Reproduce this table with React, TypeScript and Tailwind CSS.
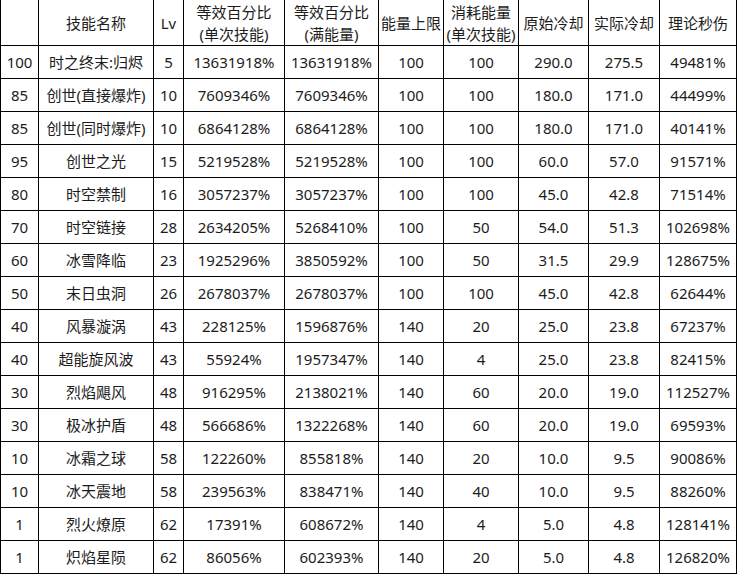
const cols = "grid-cols-[38px_115px_30px_101px_94px_65px_75px_70px_71px_77px]";

const headers: string[][] = [
  [""],
  ["技能名称"],
  ["Lv"],
  ["等效百分比", "(单次技能)"],
  ["等效百分比", "(满能量)"],
  ["能量上限"],
  ["消耗能量", "(单次技能)"],
  ["原始冷却"],
  ["实际冷却"],
  ["理论秒伤"],
];

const rows: string[][] = [
  ["100", "时之终末:归烬", "5", "13631918%", "13631918%", "100", "100", "290.0", "275.5", "49481%"],
  ["85", "创世(直接爆炸)", "10", "7609346%", "7609346%", "100", "100", "180.0", "171.0", "44499%"],
  ["85", "创世(同时爆炸)", "10", "6864128%", "6864128%", "100", "100", "180.0", "171.0", "40141%"],
  ["95", "创世之光", "15", "5219528%", "5219528%", "100", "100", "60.0", "57.0", "91571%"],
  ["80", "时空禁制", "16", "3057237%", "3057237%", "100", "100", "45.0", "42.8", "71514%"],
  ["70", "时空链接", "28", "2634205%", "5268410%", "100", "50", "54.0", "51.3", "102698%"],
  ["60", "冰雪降临", "23", "1925296%", "3850592%", "100", "50", "31.5", "29.9", "128675%"],
  ["50", "末日虫洞", "26", "2678037%", "2678037%", "100", "100", "45.0", "42.8", "62644%"],
  ["40", "风暴漩涡", "43", "228125%", "1596876%", "140", "20", "25.0", "23.8", "67237%"],
  ["40", "超能旋风波", "43", "55924%", "1957347%", "140", "4", "25.0", "23.8", "82415%"],
  ["30", "烈焰飓风", "48", "916295%", "2138021%", "140", "60", "20.0", "19.0", "112527%"],
  ["30", "极冰护盾", "48", "566686%", "1322268%", "140", "60", "20.0", "19.0", "69593%"],
  ["10", "冰霜之球", "58", "122260%", "855818%", "140", "20", "10.0", "9.5", "90086%"],
  ["10", "冰天震地", "58", "239563%", "838471%", "140", "40", "10.0", "9.5", "88260%"],
  ["1", "烈火燎原", "62", "17391%", "608672%", "140", "4", "5.0", "4.8", "128141%"],
  ["1", "炽焰星陨", "62", "86056%", "602393%", "140", "20", "5.0", "4.8", "126820%"],
];

export default function App() {
  return (
    <div
      className="w-[739px] h-[575px] overflow-hidden bg-white text-[15px] text-[#1c1c1c]"
      style={{ fontFamily: '"Noto Sans", "Noto Sans CJK SC", sans-serif' }}
    >
      <div className={`grid ${cols} w-[737px] border-l border-black`}>
        {/* 表头 */}
        {headers.map((h, i) => (
          <div
            key={`h${i}`}
            className="flex h-[46px] flex-col items-center justify-center whitespace-nowrap border-b border-r border-black leading-[22px]"
          >
            {h.map((line, j) => (
              <span key={j}>{line}</span>
            ))}
          </div>
        ))}

        {/* 数据行 */}
        {rows.map((r, ri) =>
          r.map((cell, ci) => (
            <div
              key={`${ri}-${ci}`}
              className="flex h-[33px] items-center justify-center whitespace-nowrap border-b border-r border-black"
            >
              {cell}
            </div>
          ))
        )}
      </div>
    </div>
  );
}
